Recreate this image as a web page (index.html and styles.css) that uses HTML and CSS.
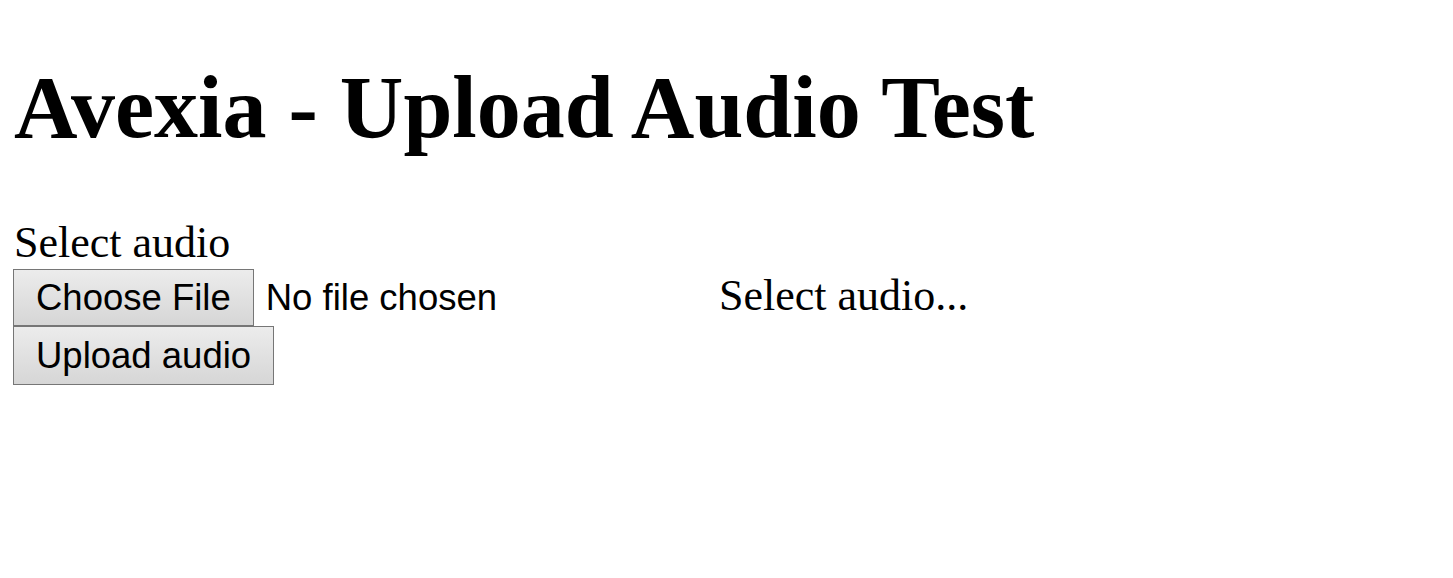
FILE: index.html
```html
<!DOCTYPE html>
<html>
<head>
<meta charset="utf-8">
<title>Avexia - Upload Audio Test</title>
<link rel="stylesheet" href="styles.css">
</head>
<body>
<h1 class="title">Avexia - Upload Audio Test</h1>
<div class="label">Select audio</div>
<div class="file-row">
  <div class="file">
    <span class="btn">Choose File</span>
    <span class="file-name">No file chosen</span>
  </div>
  <span class="status">Select audio...</span>
</div>
<div class="upload-row">
  <span class="btn btn-upload">Upload audio</span>
</div>
</body>
</html>
```

FILE: styles.css
```css
html, body {
  margin: 0;
  padding: 0;
  background: #ffffff;
}
body {
  padding: 0 13px;
  font-family: "Liberation Serif", "Times New Roman", serif;
  color: #000;
}
.title {
  font-size: 88px;
  line-height: 100px;
  font-weight: bold;
  margin: 58px 0 59px 1px;
}
.label {
  font-size: 44px;
  line-height: 51px;
  margin: 0 0 1px 1px;
}
.file-row {
  display: flex;
  align-items: baseline;
}
.file {
  width: 695px;
  display: flex;
  align-items: baseline;
}
.btn {
  box-sizing: border-box;
  display: inline-block;
  font-family: "Liberation Sans", Arial, sans-serif;
  font-size: 36.5px;
  line-height: 41px;
  padding: 7px 22px 7px 22px;
  border: 1px solid #767676;
  background: linear-gradient(#ececec, #d6d6d6);
  color: #000;
  white-space: nowrap;
}
.file .btn {
  height: 57px;
}
.file-name {
  font-family: "Liberation Sans", Arial, sans-serif;
  font-size: 36.5px;
  margin-left: 12px;
}
.status {
  font-size: 44px;
  margin-left: 11px;
}
.upload-row {
  display: flex;
}
.btn-upload {
  height: 59px;
  padding-top: 8px;
}
```
